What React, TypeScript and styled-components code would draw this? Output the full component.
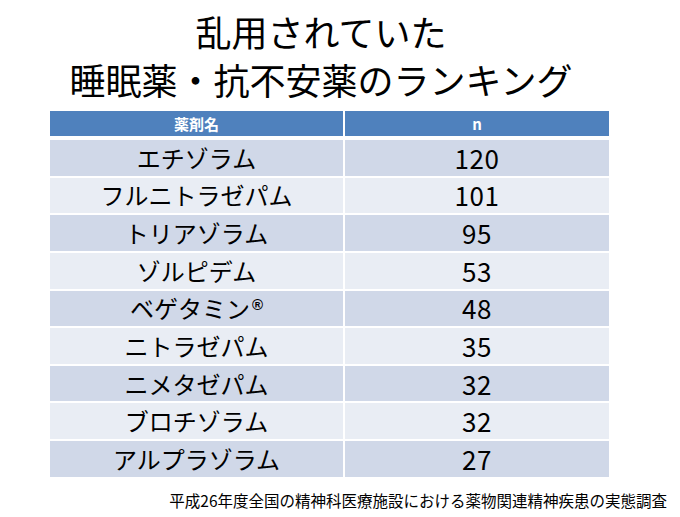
import { Fragment } from 'react';
import styled, { createGlobalStyle } from 'styled-components';

const GlobalStyle = createGlobalStyle`
	html, body {
		margin: 0;
		padding: 0;
		background: #fff;
	}
	body {
		font-family: "Noto Sans CJK JP", "Noto Sans", sans-serif;
		color: #000;
	}
`;

const Slide = styled.div`
	width: 680px;
	height: 517px;
	display: flex;
	flex-direction: column;
	align-items: flex-start;
	overflow: hidden;
`;
const Title = styled.h1`
	width: 642px;
	margin: 7px 0 0;
	font-size: 36px;
	font-weight: 400;
	line-height: 48px;
	text-align: center;
`;
const Table = styled.div`
	margin: 8px 0 0 50px;
	display: grid;
	grid-template-columns: 293px 264px;
	grid-auto-rows: 35.65px;
	grid-template-rows: 27px;
	column-gap: 2px;
	row-gap: 2px;
`;
const HeadCell = styled.div`
	height: 25px;
	background: #4f81bd;
	color: #fff;
	font-size: 15px;
	font-weight: 700;
	display: flex;
	align-items: center;
	justify-content: center;
`;
const Cell = styled.div<{ $odd: boolean; $num?: boolean }>`
	background: ${props => (props.$odd ? '#d0d8e8' : '#e9edf4')};
	display: flex;
	align-items: center;
	justify-content: center;
	font-size: ${props => (props.$num ? '26px' : '24px')};
	letter-spacing: ${props => (props.$num ? '0.5px' : '0')};
	line-height: 1;
`;
const Mark = styled.span`
	font-family: "Liberation Sans", sans-serif;
	font-size: 15px;
	font-weight: 700;
	align-self: flex-start;
	margin-top: 6px;
	margin-left: 2px;
`;
const Source = styled.p`
	align-self: flex-end;
	margin: 13px 13px 0 0;
	font-size: 15.5px;
	line-height: 20px;
`;

interface IDrug {
	name: string;
	n: number;
	mark?: boolean;
}

const drugs: IDrug[] = [
	{ name: 'エチゾラム', n: 120 },
	{ name: 'フルニトラゼパム', n: 101 },
	{ name: 'トリアゾラム', n: 95 },
	{ name: 'ゾルピデム', n: 53 },
	{ name: 'ベゲタミン', n: 48, mark: true },
	{ name: 'ニトラゼパム', n: 35 },
	{ name: 'ニメタゼパム', n: 32 },
	{ name: 'ブロチゾラム', n: 32 },
	{ name: 'アルプラゾラム', n: 27 },
];

function App() {
	return (
		<>
			<GlobalStyle />
			<Slide>
				<Title>
					乱用されていた
					<br />
					睡眠薬・抗不安薬のランキング
				</Title>
				<Table>
					<HeadCell>薬剤名</HeadCell>
					<HeadCell>n</HeadCell>
					{drugs.map((drug, i) => (
						<Fragment key={drug.name}>
							<Cell $odd={i % 2 === 0}>
								{drug.name}
								{drug.mark && <Mark>®</Mark>}
							</Cell>
							<Cell $odd={i % 2 === 0} $num>
								{drug.n}
							</Cell>
						</Fragment>
					))}
				</Table>
				<Source>平成26年度全国の精神科医療施設における薬物関連精神疾患の実態調査</Source>
			</Slide>
		</>
	);
}

export default App;
